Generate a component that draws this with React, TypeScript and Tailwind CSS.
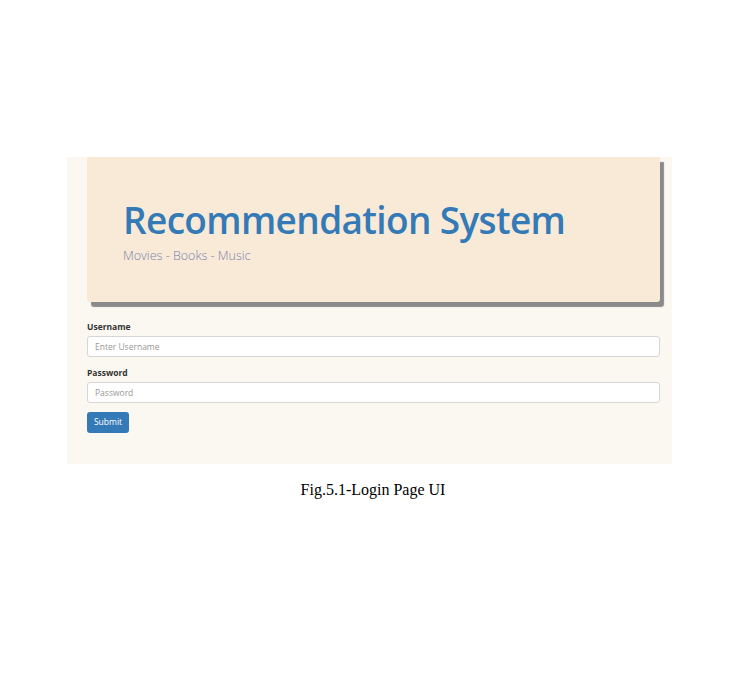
import React from 'react';

const App: React.FC = () => {
  return (
    <div className="min-h-[683px] w-[746px] bg-white pt-[157px]">
      <div className="ml-[67px] w-[605px] bg-[#fbf8f2] pl-[20px] pr-[12px] pb-[31px]" style={{ fontFamily: '"Open Sans", "Noto Sans", sans-serif' }}>
        <div className="h-[145px] rounded-b-[3px] bg-[#f9ead7] pl-[36px] pt-[38px] shadow-[4px_5px_1px_#8a8a8a]">
          <h1 className="text-[37px] font-semibold leading-[50px] tracking-[-0.65px] text-[#337ab7]">Recommendation System</h1>
          <p className="mt-[3px] text-[12.5px] font-light leading-[16px] text-[#7a82b0]">Movies - Books - Music</p>
        </div>

        <form className="mt-[19px] flex flex-col">
          <label className="text-[8.5px] font-bold leading-[12px] text-[#333]">Username</label>
          <input
            className="mt-[3px] h-[21px] rounded-[3px] border border-[#d6d6d6] bg-white px-[7px] text-[8.5px] text-[#555] outline-none placeholder:text-[#999]"
            placeholder="Enter Username"
          />
          <label className="mt-[10px] text-[8.5px] font-bold leading-[12px] text-[#333]">Password</label>
          <input
            type="password"
            className="mt-[3px] h-[21px] rounded-[3px] border border-[#d6d6d6] bg-white px-[7px] text-[8.5px] text-[#555] outline-none placeholder:text-[#999]"
            placeholder="Password"
          />
          <div className="mt-[9px]">
            <button type="button" className="block h-[21px] w-[42px] rounded-[3px] bg-[#337ab7] text-[8.5px] text-white">
              Submit
            </button>
          </div>
        </form>
      </div>

      <p className="mt-[16px] text-center text-[16px] leading-[19px] text-black" style={{ fontFamily: '"Liberation Serif", serif' }}>
        Fig.5.1-Login Page UI
      </p>
    </div>
  );
};

export default App;
